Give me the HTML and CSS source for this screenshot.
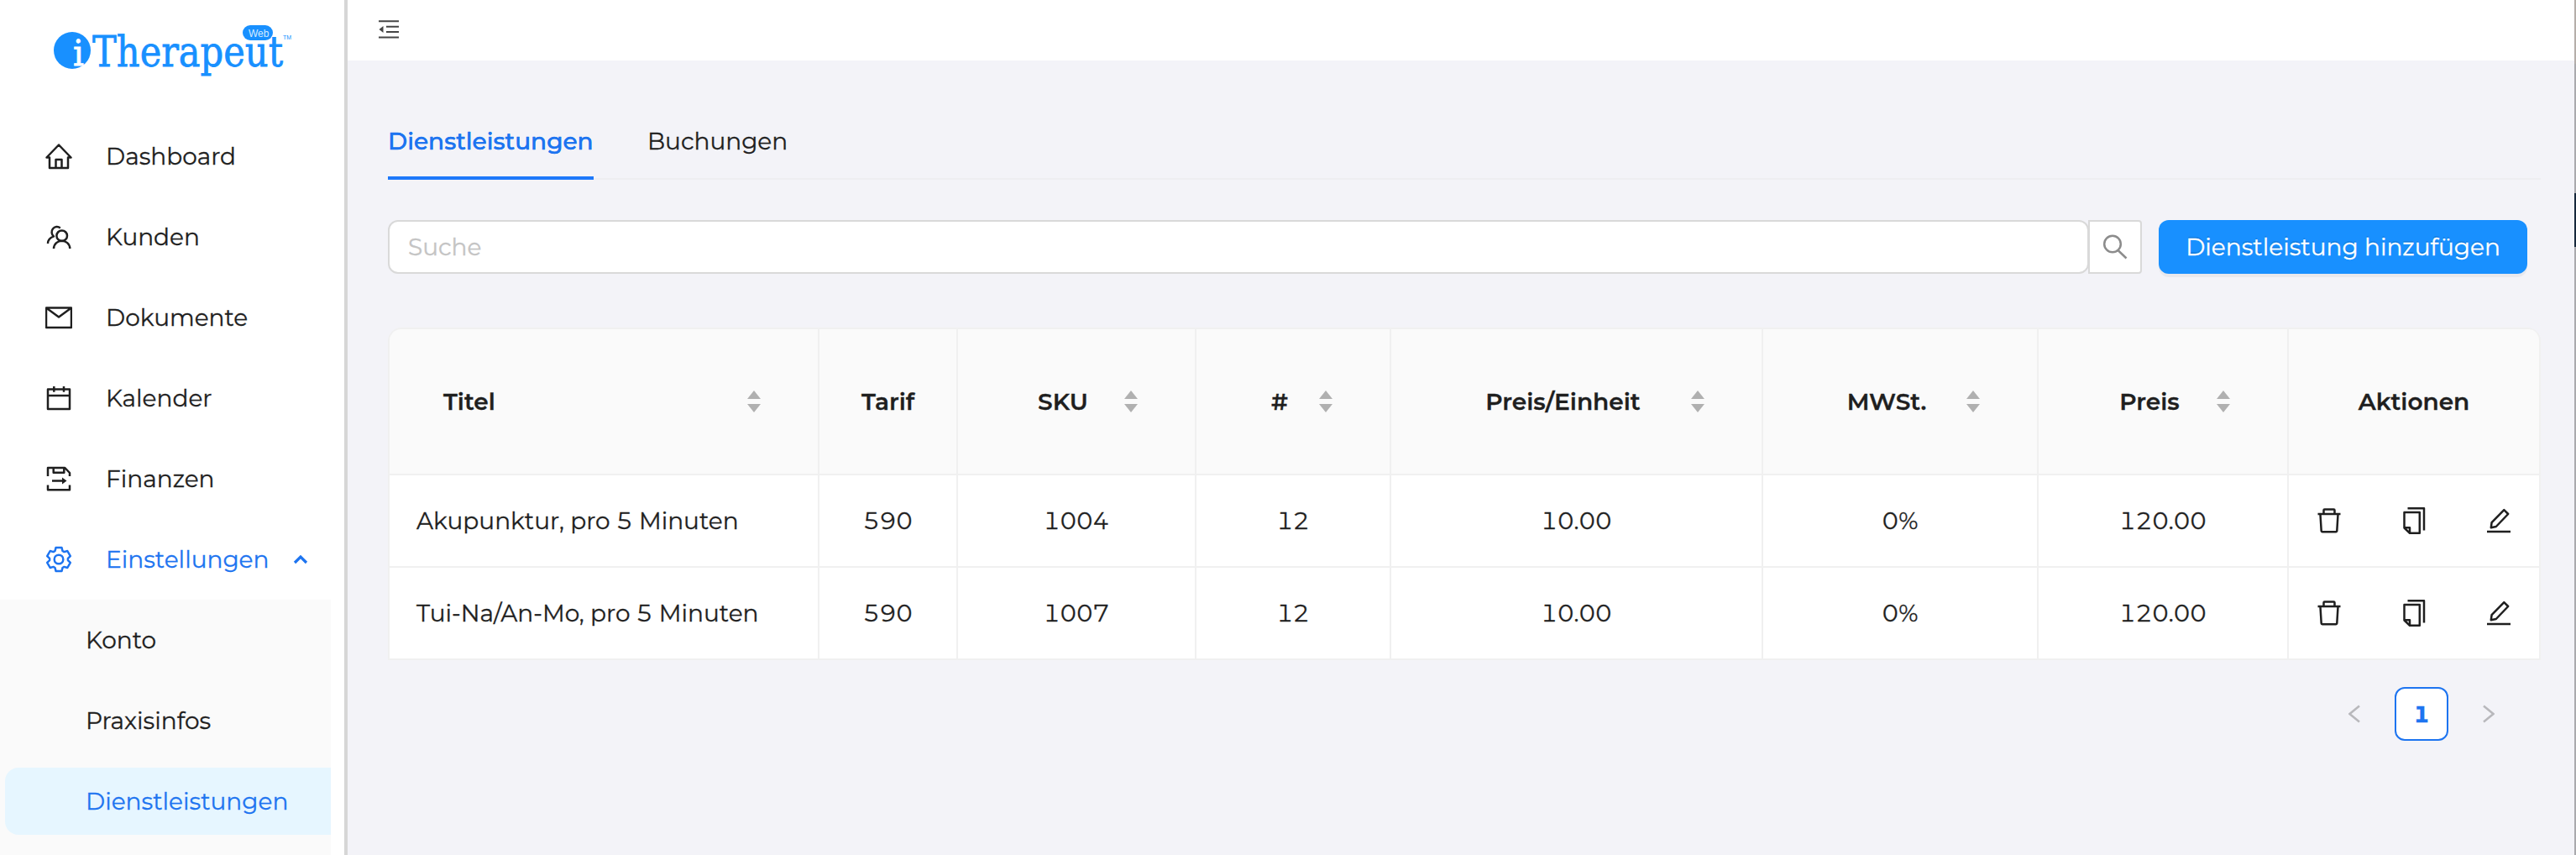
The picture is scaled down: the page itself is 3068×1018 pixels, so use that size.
FILE: index.html
```
<!DOCTYPE html>
<html lang="de">
<head>
    <meta charset="UTF-8">
    <title>iTherapeut Web</title>
    <link rel="stylesheet" href="styles.css">
</head>
<body>
    <svg class="sprite" width="0" height="0">
        <symbol id="trash" viewBox="0 0 32 32">
            <path d="M2.5 8H29.5M9.5 7.5V3.5Q9.5 2.5 10.5 2.5H21.5Q22.5 2.5 22.5 3.5V7.5M5.5 8.5L6.7 28.2Q6.8 29.2 7.8 29.2H24.2Q25.2 29.2 25.3 28.2L26.5 8.5"/>
        </symbol>
        <symbol id="copy" viewBox="0 0 32 32">
            <path d="M8.5 1.2H28V27.5M4.5 6H22.8V30.8H11L4.5 24.5ZM5 24.2H11V30.5"/>
        </symbol>
        <symbol id="edit" viewBox="0 0 32 32">
            <path d="M2 29H30M6.8 24.2L7.6 18.2L22.3 3.2L27.2 8L12.8 23L6.8 24.2Z"/>
        </symbol>
    </svg>

    <div class="layout">
        <aside class="sidebar">
            <svg class="logo" width="284" height="66" viewBox="0 0 284 66">
                <circle cx="22" cy="32" r="22"/>
                <text class="logo-i" x="23" y="50" textLength="13" lengthAdjust="spacingAndGlyphs">i</text>
                <text class="logo-name" x="46" y="51" textLength="227" lengthAdjust="spacingAndGlyphs">Therapeut</text>
                <rect x="225" y="2" width="36" height="18" rx="9"/>
                <text class="logo-web" x="232" y="15.5">Web</text>
                <text class="logo-tm" x="273" y="19">TM</text>
            </svg>
            <nav class="menu">
                <a class="menu-item">
                    <svg class="icon" viewBox="0 0 32 32"><path d="M1.5 17.5L16 2.5L30.5 17.5H27V30H5V17.5ZM12.5 30V20H19.5V30"/></svg>
                    <span>Dashboard</span>
                </a>
                <a class="menu-item">
                    <svg class="icon" viewBox="0 0 32 32"><circle cx="19.7" cy="14.7" r="6.3"/><path d="M10 30C10.5 17.8 28.8 17.8 29.3 30M17.8 5.4A6.3 6.3 0 1 0 10 15.4C5.5 17 3 20 3 24"/></svg>
                    <span>Kunden</span>
                </a>
                <a class="menu-item">
                    <svg class="icon" viewBox="0 0 32 32"><path d="M1 4.5H31V28H1ZM1 4.5L16 15.5L31 4.5"/></svg>
                    <span>Dokumente</span>
                </a>
                <a class="menu-item">
                    <svg class="icon" viewBox="0 0 32 32"><path d="M3 5.6H29V29H3ZM3 13H29M10.3 2V8.8M22 2V8.8"/></svg>
                    <span>Kalender</span>
                </a>
                <a class="menu-item">
                    <svg class="icon" viewBox="0 0 32 32"><path d="M3 13V3H23.3L29 9V13M9.7 3V8.7H22.3V3M3 23.5V29.3H29V23.5M8 18.5H21"/><path class="filled" d="M20 14.5L25.5 18.5L20 22.5Z"/></svg>
                    <span>Finanzen</span>
                </a>
                <a class="menu-item open">
                    <svg class="icon" viewBox="-16 -16 32 32"><circle r="5.3"/><path d="M-4.5 -10L-3.5 -13.9H3.5L4.5 -10L6.4 -8.9L10.3 -10L13.8 -3.9L10.9 -1.1V1.1L13.8 3.9L10.3 10L6.4 8.9L4.5 10L3.5 13.9H-3.5L-4.5 10L-6.4 8.9L-10.3 10L-13.8 3.9L-10.9 1.1V-1.1L-13.8 -3.9L-10.3 -10L-6.4 -8.9Z"/></svg>
                    <span>Einstellungen</span>
                    <svg class="arrow" width="18" height="12" viewBox="0 0 18 12"><path d="M2 10L9 3L16 10"/></svg>
                </a>
                <div class="submenu">
                    <a class="menu-item">Konto</a>
                    <a class="menu-item">Praxisinfos</a>
                    <a class="menu-item selected">Dienstleistungen</a>
                </div>
            </nav>
        </aside>

        <main class="main">
            <header class="header">
                <svg width="24" height="22" viewBox="0 0 24 22"><path d="M0 1.2H24M9 7.8H24M9 14H24M0 20.5H24"/><path class="filled" d="M5.5 7V15L0.5 11Z"/></svg>
            </header>

            <div class="content">
                <div class="tabs">
                    <div class="tab active">Dienstleistungen</div>
                    <div class="tab">Buchungen</div>
                </div>

                <div class="toolbar">
                    <input class="search" type="text" placeholder="Suche">
                    <button class="search-button">
                        <svg width="30" height="30" viewBox="0 0 30 30"><circle cx="12" cy="11.5" r="9.8"/><path d="M18.5 19L28.5 28.5"/></svg>
                    </button>
                    <button class="add-button">Dienstleistung hinzufügen</button>
                </div>

                <table class="table">
                    <colgroup>
                        <col class="col-title"><col class="col-tarif"><col class="col-sku"><col class="col-count">
                        <col class="col-unit"><col class="col-vat"><col class="col-price"><col class="col-actions">
                    </colgroup>
                    <thead>
                        <tr>
                            <th><div class="sortable left"><span>Titel</span><i class="sorter"></i></div></th>
                            <th>Tarif</th>
                            <th><div class="sortable"><span>SKU</span><i class="sorter"></i></div></th>
                            <th><div class="sortable"><span>#</span><i class="sorter"></i></div></th>
                            <th><div class="sortable"><span>Preis/Einheit</span><i class="sorter"></i></div></th>
                            <th><div class="sortable"><span>MWSt.</span><i class="sorter"></i></div></th>
                            <th><div class="sortable"><span>Preis</span><i class="sorter"></i></div></th>
                            <th>Aktionen</th>
                        </tr>
                    </thead>
                    <tbody>
                        <tr>
                            <td class="title">Akupunktur, pro 5 Minuten</td>
                            <td>590</td>
                            <td>1004</td>
                            <td>12</td>
                            <td>10.00</td>
                            <td>0%</td>
                            <td>120.00</td>
                            <td>
                                <div class="actions">
                                    <svg class="icon"><use href="#trash"/></svg>
                                    <svg class="icon"><use href="#copy"/></svg>
                                    <svg class="icon"><use href="#edit"/></svg>
                                </div>
                            </td>
                        </tr>
                        <tr>
                            <td class="title">Tui-Na/An-Mo, pro 5 Minuten</td>
                            <td>590</td>
                            <td>1007</td>
                            <td>12</td>
                            <td>10.00</td>
                            <td>0%</td>
                            <td>120.00</td>
                            <td>
                                <div class="actions">
                                    <svg class="icon"><use href="#trash"/></svg>
                                    <svg class="icon"><use href="#copy"/></svg>
                                    <svg class="icon"><use href="#edit"/></svg>
                                </div>
                            </td>
                        </tr>
                    </tbody>
                </table>

                <div class="pagination">
                    <svg width="14" height="22" viewBox="0 0 14 22"><path d="M13 1.5L1.5 11L13 20.5"/></svg>
                    <span class="page">1</span>
                    <svg width="14" height="22" viewBox="0 0 14 22"><path d="M1 1.5L12.5 11L1 20.5"/></svg>
                </div>
            </div>
        </main>
        <div class="edge"></div>
    </div>
</body>
</html>
```
FILE: styles.css
```
* {
    box-sizing: border-box;
}
body {
    margin: 0;
    font-family: Montserrat, Inter, "Open Sans", sans-serif;
    font-size: 28px;
    font-variant-numeric: tabular-nums;
    -webkit-text-stroke: 0.3px;
    color: #1f1f1f;
    background: #f3f3f8;
}
svg {
    fill: none;
    stroke: currentColor;
    stroke-width: 2.5;
}
.sprite {
    display: none;
}
.filled {
    fill: currentColor;
    stroke: none;
}
.icon {
    width: 32px;
    height: 32px;
    flex: none;
    stroke-linejoin: round;
}
.layout {
    display: flex;
    height: 1018px;
    overflow: hidden;
}

/* Sidebar */
.sidebar {
    width: 414px;
    flex: none;
    background: #fff;
    border-right: 4px solid #d6d6d6;
}
.logo {
    display: block;
    margin: 28px 0 0 64px;
    overflow: visible;
    fill: #1890ff;
    stroke: none;
}
.logo-name,
.logo-i {
    font-family: "DejaVu Serif", serif;
    font-size: 50px;
    stroke: #1890ff;
    stroke-width: 0.8;
}
.logo-i {
    font-size: 43px;
    fill: #fff;
    stroke: #fff;
}
.logo-web {
    font-family: "Liberation Sans", sans-serif;
    font-size: 12px;
    fill: #d5ebff;
}
.logo-tm {
    font-family: "Liberation Sans", sans-serif;
    font-size: 7px;
}
.menu {
    display: flex;
    flex-direction: column;
    width: 394px;
    padding-top: 44px;
}
.menu-item {
    display: flex;
    flex: none;
    align-items: center;
    height: 80px;
    margin: 8px 0 8px 6px;
    padding-left: 48px;
    border-radius: 16px 0 0 16px;
}
.menu-item span {
    margin-left: 40px;
}
.menu-item.open {
    color: #1d74f0;
}
.arrow {
    margin-left: auto;
    margin-right: 27px;
    stroke-width: 3.2;
}
.submenu {
    display: flex;
    flex-direction: column;
    flex: none;
    height: 320px;
    background: #fafafa;
}
.submenu .menu-item {
    padding-left: 96px;
}
.submenu .selected {
    color: #1d74f0;
    background: #e6f6ff;
}

/* Header */
.main {
    flex: 1;
}
.header {
    display: flex;
    height: 72px;
    padding: 24px 0 0 37px;
    color: #454545;
    background: #fff;
}
.header svg {
    stroke-width: 2;
}
.content {
    padding: 56px 40px 0 48px;
}

/* Tabs */
.tabs {
    display: flex;
    gap: 64px;
    height: 86px;
    border-bottom: 2px solid #eeeef1;
}
.tab {
    height: 86px;
    line-height: 80px;
}
.tab.active {
    width: 245px;
    font-weight: 500;
    color: #1d74f0;
    border-bottom: 4px solid #1d78fa;
    text-shadow: 0 0 0.5px currentColor;
    white-space: nowrap;
}

/* Search */
.toolbar {
    display: flex;
    height: 64px;
    margin: 48px 16px 64px 0;
}
.search {
    flex: 1;
    margin-right: -1px;
    padding: 0 22px;
    font: inherit;
    background: #fff;
    border: 2px solid #d9d9d9;
    border-radius: 12px;
}
.search::placeholder {
    color: #c4c4c4;
}
.search-button {
    display: flex;
    align-items: center;
    justify-content: center;
    width: 64px;
    margin-right: 20px;
    padding: 0;
    color: #8c8c8c;
    background: #fff;
    border: 2px solid #d9d9d9;
    border-radius: 0 4px 4px 0;
}
.add-button {
    width: 439px;
    padding: 0;
    font: inherit;
    color: #fff;
    background: #1890ff;
    border: none;
    border-radius: 12px;
    box-shadow: 0 4px 0 rgba(0,0,0,0.043);
    text-shadow: 0 -2px 0 rgba(0,0,0,0.12);
}

/* Table */
.table {
    width: 2564px;
    table-layout: fixed;
    border-collapse: separate;
    border-spacing: 0;
    border: 2px solid #f0f0f0;
    border-right: none;
    border-bottom: none;
    border-radius: 16px 16px 0 0;
}
.col-title { width: 512px; }
.col-tarif { width: 165px; }
.col-sku { width: 284px; }
.col-count { width: 232px; }
.col-unit { width: 443px; }
.col-vat { width: 328px; }
.col-price { width: 298px; }
.col-actions { width: 300px; }
.table th,
.table td {
    padding: 0;
    text-align: center;
    border-right: 2px solid #f0f0f0;
    border-bottom: 2px solid #f0f0f0;
}
.table th {
    height: 174px;
    font-weight: 600;
    background: #fafafa;
}
.table th:first-child {
    border-top-left-radius: 14px;
}
.table th:last-child {
    border-top-right-radius: 14px;
}
.table td {
    height: 110px;
    background: #fff;
}
.table .title {
    padding-left: 32px;
    text-align: left;
}
.sortable {
    display: flex;
    align-items: center;
    padding: 0 68px 0 64px;
}
.sortable span {
    flex: 1;
    margin-right: 12px;
}
.sortable.left {
    text-align: left;
}
.sorter {
    display: flex;
    flex-direction: column;
    gap: 6px;
}
.sorter::before,
.sorter::after {
    content: "";
    border: 8.5px solid transparent;
}
.sorter::before {
    border-top: 0;
    border-bottom: 10px solid #b0b0b0;
}
.sorter::after {
    border-bottom: 0;
    border-top: 10px solid #b0b0b0;
}
.actions {
    display: flex;
    justify-content: space-between;
    padding: 0 32px;
}

/* Pagination */
.pagination {
    display: flex;
    justify-content: flex-end;
    align-items: center;
    gap: 41px;
    margin-top: 32px;
    padding-right: 55px;
    color: #b8b8bc;
}
.page {
    width: 64px;
    height: 64px;
    line-height: 60px;
    font-weight: 700;
    text-align: center;
    color: #1d74f0;
    background: #fff;
    border: 2px solid #1d74f0;
    border-radius: 12px;
}

/* Window edge on the right */
.edge {
    width: 2px;
    flex: none;
    background: linear-gradient(#b5aeaa 0 76px, #a9a9ad 76px 230px, #16283c 230px 294px, #a9a9ad 294px);
}
```
